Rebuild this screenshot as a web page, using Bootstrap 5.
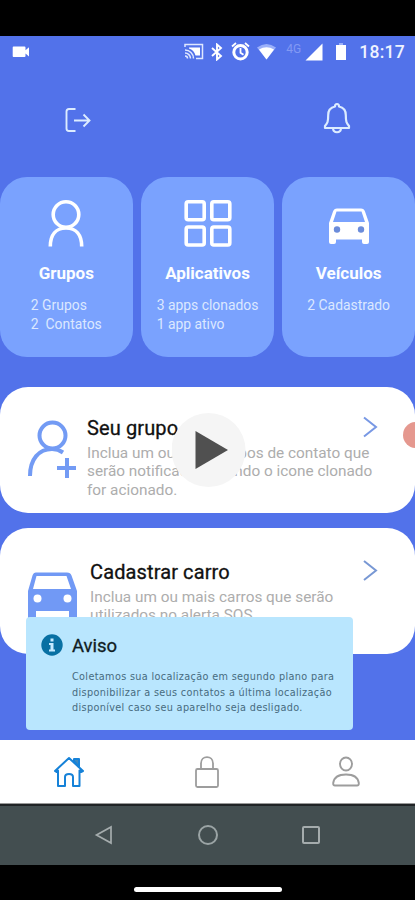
<!DOCTYPE html>
<html lang="pt-BR">
<head>
<meta charset="utf-8">
<meta name="viewport" content="width=device-width, initial-scale=1">
<title>Início</title>
<link href="https://cdn.jsdelivr.net/npm/bootstrap@5.3.0/dist/css/bootstrap.min.css" rel="stylesheet">
<style>
body{font-family:Roboto,"Liberation Sans",sans-serif;width:415px;height:900px;background:#000;overflow:hidden}
svg{display:block;flex:none}
.top-gap{height:36px}
.screen{height:704px;background:#5272ea}
.status{height:31px;padding:0 10px 0 12px;color:#fff}
.net{font-size:12px;color:#8299f4;line-height:12px;width:18px;margin:0 1px 5px 10px}
.batt{margin-left:13px}
.bt{margin-left:7px}
.clock{font-size:17.5px;font-weight:500;line-height:30px;margin-left:13px;letter-spacing:.25px;color:#eef3ff}
.actions{height:110px;padding:35px 64px 0 65px}
.tiles{gap:8.5px;height:180px}
.tile{flex:1 1 0;background:#7aa2fe;border-radius:27px;padding-top:22px;color:#fff}
.tile h2{font-size:17px;font-weight:700;line-height:20px;margin:16px 0 13px;color:#fbfdff}
.tile p{font-size:13.9px;line-height:19px;white-space:pre;color:#dce8ff;margin:0}
.panel{background:#fff;border-radius:28px;height:126px}
.panel h3{font-size:20px;font-weight:400;line-height:24px;margin:0 0 4px;color:#111;white-space:nowrap;-webkit-text-stroke:.3px #111;letter-spacing:.12px}
.panel p{font-size:15.35px;line-height:18.3px;color:#adadad;margin:0;white-space:nowrap}
.first-panel{margin-top:30px;padding:29px 37px 0 26px}
.second-panel{margin-top:15px;padding:32px 37px 0 26px}
.copy{width:260px}
.first-panel .copy{margin-left:11px}
.second-panel .copy{margin-left:13px}
.car{margin-top:-1px}
.notice{left:26px;top:581px;width:327px;height:113px;background:#b9e6fe;border-radius:4px;padding:17px 0 0 15px}
.notice-copy{padding-left:9px}
.notice h4{font-size:18.5px;font-weight:400;line-height:24px;margin:0;color:#101c22;-webkit-text-stroke:.3px #101c22}
.notice p{font-family:"DejaVu Sans",sans-serif;font-size:9.7px;letter-spacing:.34px;line-height:15.6px;margin:11px 0 0;color:#476b7e;white-space:nowrap}
.play{left:172px;top:377px;z-index:3}
.touch-dot{left:403px;top:386px;width:26px;height:26px;border-radius:50%;background:#e5988f}
.tabs{height:64px;background:#fff;border-bottom:1px solid #999}
.tabs>div{width:138.33px}
.sysnav{height:61px;background:#434e50;border-top:2px solid #202426;padding:0 94px 2px 94px}
.home-pill{width:148px;height:5px;border-radius:3px;background:#fff;margin-top:22px}
</style>
</head>
<body>
<div class="top-gap"></div>
<main class="screen position-relative overflow-hidden">
  <div class="status d-flex align-items-center">
    <svg width="18" height="14" viewBox="0 0 18 14" fill="#fff"><path d="M1.500 1.500h11q1 0 1 1v2.800l3.500-3v9.200l-3.500-3v2.500q0 1-1 1h-11q-.8 0-.8-1v-8.500q0-1 .8-1z"/></svg>
    <svg class="ms-auto" width="20" height="17" viewBox="0 0 20 17" fill="none" stroke="#dfe7ff" stroke-width="1.500"><path d="M1 4V1.500h17.500v14H12M1 7a8.500 8.500 0 0 1 8.500 8.500M1 10a5.500 5.500 0 0 1 5.500 5.500M1 13a2.500 2.500 0 0 1 2.500 2.500"/><path d="M5 4.500h11v8h-4.500Q10 7 5 5.500z" fill="#fff" stroke="none"/></svg>
    <svg class="bt" width="12" height="18" viewBox="0 0 12 18" fill="none" stroke="#fff" stroke-width="1.900"><path d="M1 5l9 8-4 3.500v-15L10 5l-9 8"/></svg>
    <svg class="ms-2" width="19" height="19" viewBox="0 0 19 19"><circle cx="9.500" cy="10.300" r="6.700" fill="#5272ea" stroke="#fff" stroke-width="3"/><path d="M1 4.500L5 1M18 4.500L14 1M9.500 6v4.700l3 2" fill="none" stroke="#fff" stroke-width="1.800"/></svg>
    <svg class="bt" width="19" height="17" viewBox="0 0 19 17"><path d="M0 4.500Q9.500-2.500 19 4.500L9.500 16.500z" fill="#9bb0fa"/><path d="M2 6.500Q9.500 2 17 6.500l-7.500 10z" fill="#fff"/></svg>
    <span class="net">4G</span>
    <svg width="18" height="18" viewBox="0 0 18 18" fill="#fff"><path d="M17.500.5v17H.5z"/></svg>
    <svg class="batt" width="10" height="17" viewBox="0 0 10 17"><path d="M3 0h4v2H3z" fill="#9bb0fa"/><path d="M0 2h10v15H0z" fill="#fff"/></svg>
    <span class="clock">18:17</span>
  </div>
  <div class="actions d-flex justify-content-between">
    <svg class="mt-1" width="26" height="27" viewBox="0 0 26 27" fill="none" stroke="#dcecff" stroke-width="1.900"><path d="M10.500 3H4Q1.500 3 1.500 5.500v17Q1.500 25 4 25h6.500M9 14.500h15M18.500 8.500l6 6-6 6"/></svg>
    <svg width="28" height="32" viewBox="0 0 28 32" fill="none" stroke="#dcecff" stroke-width="2.200" stroke-linejoin="round"><path d="M12 4.500Q12 2 14 2t2 2.500c4.500 1 6.800 4.500 6.800 8.500 0 7 .7 8 3.200 11v2H2v-2c2.500-3 3.200-4 3.200-11 0-4 2.300-7.500 6.800-8.500zM10 26.500c.5 5 7.500 5 8 0"/></svg>
  </div>
  <section class="tiles d-flex">
    <div class="tile d-flex flex-column align-items-center">
      <svg width="36" height="48" viewBox="0 0 36 48" fill="none" stroke="#fff" stroke-width="3.600"><circle cx="18" cy="15.500" r="12.800"/><path d="M2.300 47.500C2.300 36 8 29 18 29S33.700 36 33.700 47.500"/></svg>
      <h2>Grupos</h2>
      <p>2 Grupos
2  Contatos</p>
    </div>
    <div class="tile d-flex flex-column align-items-center">
      <svg width="48" height="48" viewBox="0 0 48 48" fill="none" stroke="#fff" stroke-width="3.600"><rect x="2.200" y="2.700" width="18" height="18" rx="2"/><rect x="27.800" y="2.700" width="18" height="18" rx="2"/><rect x="2.200" y="28" width="18" height="18" rx="2"/><rect x="27.800" y="28" width="18" height="18" rx="2"/></svg>
      <h2>Aplicativos</h2>
      <p>3 apps clonados
1 app ativo</p>
    </div>
    <div class="tile d-flex flex-column align-items-center">
      <svg width="42" height="48" viewBox="0 0 42 48"><path fill="#fff" fill-rule="evenodd" d="M9 9.500h24q3 0 4 3L41 24v19q0 2-2 2h-3q-2 0-2-2v-2.500H8V43q0 2-2 2H3q-2 0-2-2V24L5 12.500q1-3 4-3zM8.500 12.500L5 23h32l-3.500-10.500z"/><circle cx="9" cy="30.500" r="3.200" fill="#6b8cda"/><circle cx="33" cy="30.500" r="3.200" fill="#6b8cda"/></svg>
      <h2>Veículos</h2>
      <p>2 Cadastrado</p>
    </div>
  </section>
  <section class="panel first-panel d-flex">
    <svg width="50" height="66" viewBox="0 0 50 66" fill="none" stroke="#739bf4" stroke-width="4"><circle cx="26.500" cy="19.500" r="13"/><path d="M4 60C4 43 13 33 26 33q6 0 11 3.500M41 42v20M31 52h20"/></svg>
    <div class="copy">
      <h3>Seu grupo</h3>
      <p>Inclua um ou mais grupos de contato que<br>serão notificados quando o icone clonado<br>for acionado.</p>
    </div>
    <svg class="ms-auto" width="16" height="24" viewBox="0 0 16 24" fill="none" stroke="#7898e4" stroke-width="2"><path d="M2 1.500L14 11 2 20.500"/></svg>
  </section>
  <section class="panel second-panel d-flex">
    <svg class="car" width="51" height="66" viewBox="0 0 51 66"><path fill="#7199f5" fill-rule="evenodd" d="M10 13.500h31q3.500 0 4.500 3L51 32v30H43v-10H10v10H2V32l4.500-15.500q1-3 3.500-3zM10.500 17L7 30h38l-4.500-13z"/><circle cx="11.500" cy="39.500" r="4" fill="#fff"/><circle cx="41.500" cy="39.500" r="4" fill="#fff"/></svg>
    <div class="copy">
      <h3>Cadastrar carro</h3>
      <p>Inclua um ou mais carros que serão<br>utilizados no alerta SOS</p>
    </div>
    <svg class="ms-auto" width="16" height="24" viewBox="0 0 16 24" fill="none" stroke="#7898d4" stroke-width="2"><path d="M2 1L14 10.500 2 20"/></svg>
  </section>
  <div class="touch-dot position-absolute"></div>
  <svg class="play position-absolute" width="74" height="74" viewBox="0 0 74 74"><circle cx="36.500" cy="37" r="37" fill="#f5f5f5"/><path d="M23.500 18L56 37 23.500 56z" fill="#505050"/></svg>
  <aside class="notice position-absolute d-flex align-items-start">
    <svg width="22" height="22" viewBox="0 0 22 22"><circle cx="11" cy="11" r="10.700" fill="#0870a3"/><path d="M9.500 4.500h3v3h-3zM8 9h4.500v6.500H14v2H8v-2h1.500V11H8z" fill="#c5eaff"/></svg>
    <div class="notice-copy">
      <h4>Aviso</h4>
      <p>Coletamos sua localização em segundo plano para<br>disponibilizar a seus contatos a última localização<br>disponível caso seu aparelho seja desligado.</p>
    </div>
  </aside>
</main>
<nav class="tabs d-flex align-items-center">
  <div class="d-flex justify-content-center"><svg width="32" height="34" viewBox="0 0 32 34" fill="none" stroke="#1682d8" stroke-width="2" stroke-linejoin="round"><path d="M2 16L16 3l14 13-2 1-1.500-1.500V31H20V22q0-3-4-3t-4 3v9H5V15.500L3.500 17z"/><path d="M21 6V4h5v8z" fill="#4088bd"/></svg></div>
  <div class="d-flex justify-content-center"><svg width="26" height="34" viewBox="0 0 26 34" fill="none" stroke="#9d9d9d" stroke-width="1.800"><rect x="2" y="14" width="22" height="18" rx="1.500"/><path d="M7 14V8.500C7 0 19 0 19 8.500V14"/></svg></div>
  <div class="d-flex justify-content-center"><svg width="30" height="34" viewBox="0 0 30 34" fill="none" stroke="#9d9d9d" stroke-width="1.900"><ellipse cx="15" cy="9" rx="6" ry="6.500"/><path d="M4 30.500Q2 30.500 2.200 28C3 22 8 19.500 15 19.500S27 22 27.800 28q.2 2.500-1.800 2.500z"/></svg></div>
</nav>
<div class="sysnav d-flex align-items-center justify-content-between">
  <svg width="20" height="20" viewBox="0 0 20 20" fill="none" stroke="#a5acad" stroke-width="1.700"><path d="M17 2v16L2.500 10z"/></svg>
  <svg width="20" height="20" viewBox="0 0 20 20" fill="none" stroke="#9ba4a5" stroke-width="2"><circle cx="10" cy="10" r="9"/></svg>
  <svg width="20" height="20" viewBox="0 0 20 20" fill="none" stroke="#a5acad" stroke-width="2"><rect x="2" y="2" width="16" height="16" rx="1"/></svg>
</div>
<div class="home-pill mx-auto"></div>
<script src="https://cdn.jsdelivr.net/npm/bootstrap@5.3.0/dist/js/bootstrap.bundle.min.js"></script>
</body>
</html>
